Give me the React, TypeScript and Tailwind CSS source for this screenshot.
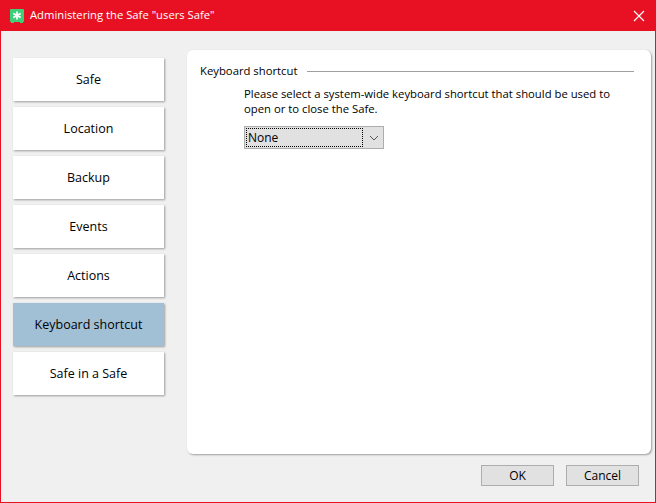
import React from "react";

const items = ["Safe", "Location", "Backup", "Events", "Actions", "Keyboard shortcut", "Safe in a Safe"];
const font = "font-['Open_Sans','Noto_Sans',sans-serif]";

export default function App() {
  return (
    <div className={`w-[656px] h-[503px] flex flex-col bg-[#f0f0f0] border border-t-0 border-[#e81123] text-[12px] text-black overflow-hidden ${font}`}>
      <div className="h-[31px] shrink-0 -mx-px bg-[#e81123] flex items-center pl-[10px] pr-[11px] text-white text-[11.25px]">
        <svg width="14" height="14" viewBox="0 0 14 14" className="mr-[6px]">
          <rect x="0" y="0" width="14" height="13" rx="1" fill="#3ecf7a" />
          <rect x="1" y="13" width="3" height="1" fill="#3ecf7a" />
          <rect x="10" y="13" width="3" height="1" fill="#3ecf7a" />
          <path d="M7 2.5v8M3.3 4.5l7.4 4M10.7 4.5L3.3 8.5" stroke="#fff" strokeWidth="1.7" />
        </svg>
        <span className="flex-1">Administering the Safe "users Safe"</span>
        <svg width="12" height="12" viewBox="0 0 12 12" fill="none" stroke="#fff" strokeWidth="1.2">
          <path d="M1 1l10 10M11 1L1 11" />
        </svg>
      </div>
      <div className="flex-1 flex flex-col pt-[19px] pr-[4px] pb-[16px] pl-[12px]">
        <div className="flex-1 flex gap-[23px]">
          <div className="w-[151px] pt-[8px] flex flex-col gap-[6px] text-[12.5px]">
            {items.map((t) => (
              <div
                key={t}
                className={`h-[43px] pt-[1px] flex items-center justify-center shadow-[1px_1px_2px_rgba(0,0,0,0.35)] ${
                  t === "Keyboard shortcut" ? "bg-[#a1c0d6]" : "bg-white"
                }`}
              >
                {t}
              </div>
            ))}
          </div>
          <div className="w-[464px] h-[404px] bg-white rounded-[6px] shadow-[1px_1px_2px_rgba(0,0,0,0.35)] pt-[12px] pl-[13px] pr-[17px] text-[11.3px]">
            <div className="flex items-center gap-[9px] h-[18px]">
              <span>Keyboard shortcut</span>
              <div className="flex-1 h-px bg-[#a0a0a0]" />
            </div>
            <div className="pl-[44px] pt-[6px]">
              <p className="leading-[15px] w-[380px]">
                Please select a system-wide keyboard shortcut that should be used to open or to close the Safe.
              </p>
              <div className="mt-[10px] w-[140px] h-[23px] bg-[#e1e1e1] border border-[#adadad] flex items-center p-[1px] text-[12px]">
                <div className="w-[117px] h-full border border-dotted border-black flex items-center pl-[1px]">None</div>
                <svg width="10" height="6" viewBox="0 0 10 6" fill="none" stroke="#555" className="ml-[6px]">
                  <path d="M1 1l4 4 4-4" />
                </svg>
              </div>
            </div>
          </div>
        </div>
        <div className="flex justify-end gap-[12px] pr-[12px]">
          {["OK", "Cancel"].map((t) => (
            <div key={t} className="w-[73px] h-[21px] bg-[#e1e1e1] border border-[#adadad] flex items-center justify-center">
              {t}
            </div>
          ))}
        </div>
      </div>
    </div>
  );
}
